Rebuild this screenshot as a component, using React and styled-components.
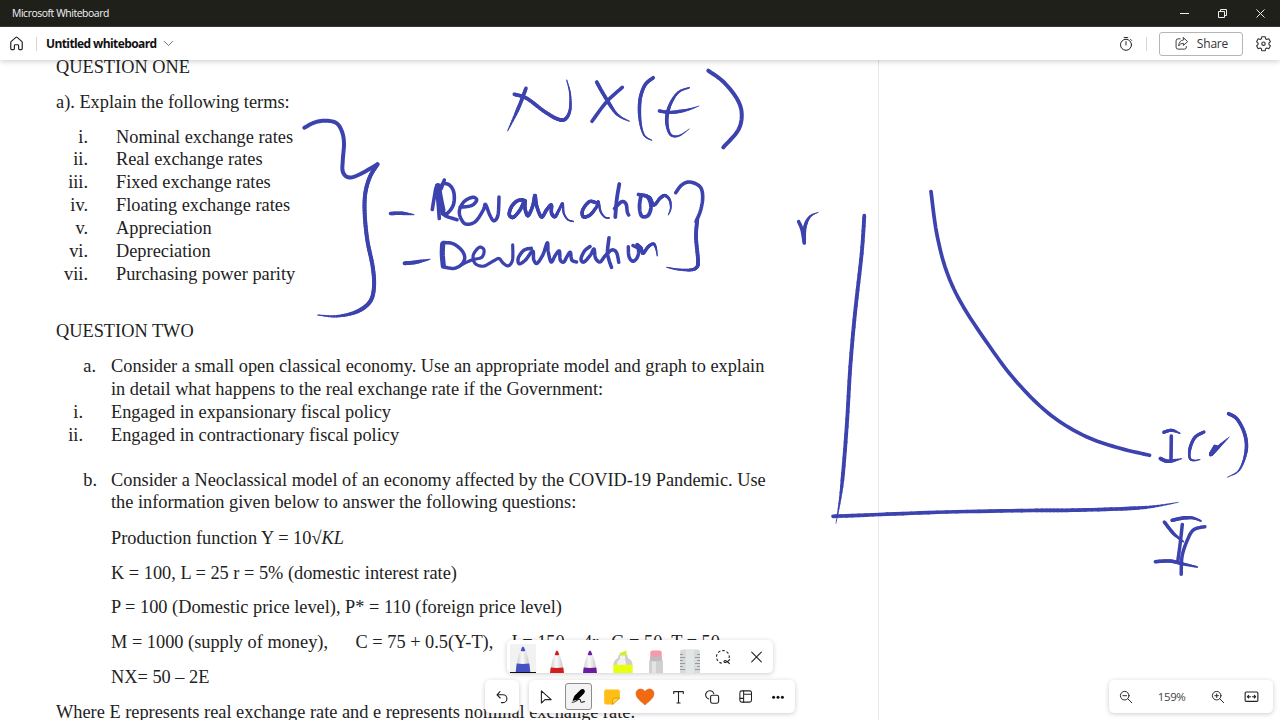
import React from 'react';
import styled, { createGlobalStyle } from 'styled-components';

const GlobalStyle = createGlobalStyle`
  * {
    box-sizing: border-box;
  }

  body {
    margin: 0;
    overflow: hidden;
    background: #fff;
    font-family: 'Open Sans', 'Noto Sans', sans-serif;
  }

  svg {
    display: block;
    flex-shrink: 0;
  }
`;

const Window = styled.div`
  width: 1280px;
  height: 720px;
  display: flex;
  flex-direction: column;
  position: relative;
  overflow: hidden;
`;

const TitleBar = styled.div`
  height: 27px;
  flex-shrink: 0;
  display: flex;
  align-items: center;
  justify-content: space-between;
  padding: 0 0 0 12px;
  background: #20201b;
  border-bottom: 1px solid #3a3a36;
  color: #f4f4f4;
  font-size: 10.4px;
  letter-spacing: -0.44px;
`;

const WindowButtons = styled.div`
  display: flex;

  svg {
    width: 38px;
    height: 26px;
  }
`;

const Header = styled.header`
  height: 33px;
  flex-shrink: 0;
  display: flex;
  align-items: center;
  padding: 0 8px 0 8px;
  background: #fff;
  box-shadow: 0 1px 6px rgba(0, 0, 0, 0.22);
  position: relative;
  z-index: 2;

  .spacer {
    flex: 1;
  }
`;

const Divider = styled.div`
  width: 1px;
  height: 14px;
  background: #d6d6d6;
  margin: ${props => props.$margin};
`;

const BoardName = styled.h1`
  margin: 0 6px 0 0;
  font-size: 12px;
  font-weight: 700;
  letter-spacing: -0.6px;
  color: #111;
  white-space: nowrap;
`;

const ShareButton = styled.button`
  width: 84px;
  height: 24px;
  margin-right: 12px;
  padding: 0;
  display: flex;
  align-items: center;
  justify-content: center;
  gap: 8px;
  border: 1px solid #b5b5b5;
  border-radius: 3px;
  background: #fff;
  color: #333;
  font-family: inherit;
  font-size: 12px;
  letter-spacing: -0.2px;
`;

const Canvas = styled.main`
  flex: 1;
  min-height: 0;
  position: relative;
  overflow: hidden;
`;

const Page = styled.article`
  width: 879px;
  height: 660px;
  overflow: hidden;
  border-right: 1px solid #e6e6e6;
  padding-left: 56px;
  font-family: 'Liberation Serif', serif;
  font-size: 18.33px;
  line-height: 22.85px;
  color: #222;
  white-space: pre;
`;

const Line = styled.div`
  margin-top: ${props => props.$top || 0}px;
  padding-left: ${props => props.$indent || 0}px;
`;

const Item = styled.div`
  display: grid;
  grid-template-columns: ${props => props.$marker}px 1fr;
  column-gap: ${props => props.$gap}px;
  margin-top: ${props => props.$top || 0}px;

  span:first-child {
    text-align: right;
  }
`;

const Ink = styled.svg`
  position: absolute;
  left: 0;
  top: 0;
  fill: none;
  stroke: #3c43ae;
  stroke-linecap: round;
  stroke-linejoin: round;
`;

const Dock = styled.div`
  position: absolute;
  left: ${props => props.$left}px;
  bottom: ${props => props.$bottom}px;
  z-index: 3;
  display: flex;
  gap: 10px;
`;

const Panel = styled.div`
  height: 33px;
  width: ${props => props.$width}px;
  padding-right: ${props => props.$inset || 0}px;
  display: flex;
  align-items: center;
  border-radius: 5px;
  background: #fff;
  box-shadow: 0 1px 5px rgba(0, 0, 0, 0.2);
`;

const Slot = styled.div`
  flex: 1;
  height: 100%;
  display: flex;
  align-items: center;
  justify-content: center;
`;

const Pressed = styled.div`
  width: 27px;
  height: 27px;
  display: flex;
  align-items: center;
  justify-content: center;
  border: 1px solid #8c8c8c;
  border-radius: 3px;
  background: #f3f3f3;
`;

const PenSlot = styled(Slot)`
  align-items: flex-end;
  ${props => props.$selected && `
    flex: none;
    width: 26px;
    height: 29px;
    margin: 4px 4px 0 3px;
    background: #f2f2f2;
    border-bottom: 1px solid #111;
  `}
`;

const ZoomLevel = styled.div`
  width: 58px;
  text-align: center;
  font-size: 11.5px;
  letter-spacing: -0.4px;
  color: #444;
`;

// Each stroke: points, width, and how thin the pen gets at either end
const strokes = [
  // brace
  { p: '304.3,127.7 315,122.3 326.7,120.7 336.7,123.3 342,131.7 344,143.3 342.8,160 342.8,171.7 348.3,177.3 358.3,175 377.5,164.3', w: 4 },
  { p: '377.5,164.3 370,176.7 365.3,193.3 364.7,213.3 367.3,240 372.7,266.7 374,286.7 370,301.7 356.7,311.7 336.7,316.3 317.7,315', w: 4, end: 0.3 },
  // NX(E)
  { p: '526,88.3 518.3,108.3 507.7,130.7', w: 3.6, end: 0.3 },
  { p: '514.3,94.3 526.7,98.3 543.3,110.7 556.7,118.7 565,119.3 570,110 570,93.3 566.7,80', w: 3.6, end: 0.3 },
  { p: '596.7,82 605,96.7 616.7,114 629.3,121.3', w: 3.6, end: 0.3 },
  { p: '622.3,87.3 606.7,101.7 592,121.3', w: 3.6 },
  { p: '653.3,77.7 645,85 640,100 640,120 644,135 651.7,140.3', w: 3.5, end: 0.3 },
  { p: '689.3,87.7 678.3,92.3 670,105 666.7,120 670,134 678.3,136 689.3,129', w: 3.6, start: 0.4, end: 0.2 },
  { p: '659.3,111 671.7,112.3 686.7,110 699,106', w: 3.3, end: 0.2 },
  { p: '708.3,70.7 723.3,81.7 736.7,98.3 741.7,113.3 738.3,130 723.3,147.3', w: 4 },
  // - Revaluation
  { p: '390.5,213.5 402,213.3 414,214.7', w: 3.6, end: 0.3 },
  { p: '432.3,209.5 434,199 436.5,187 438,202 439.3,218.5', w: 3.6 },
  { p: '438,186 440,198 442.5,210', w: 6 },
  { p: '444.3,180 441,189 443,183.5 450,185.5 454,193.3 453.3,205 447,213.5 442,213 447,216.5 457,219.7', w: 3.6 },
  { p: '460,207.3 471.7,205.5 476.7,200 472.7,197.3 464,201.7 459.3,211.7 462.7,221.7 468.3,224.3 476,221 483.3,210 485.5,204.5 490,215.5 494,220.8 498,215 499,197', w: 3.5 },
  { p: '523,199.7 517,201 511.5,206.7 509.3,214.5 513.3,217.3 520,210 524.8,200.5 525,208.5 528,215.7 532.7,206 535,195.5 536.7,206 541.5,217 546.5,210 551.3,205 551.5,213 555,216.7 559,210 562.5,203.5 563.7,213 567.7,219.5 573.3,221.5', w: 3.5, end: 0.4 },
  { p: '596,202.7 589.3,201.7 582.7,210 583.3,216.7 590,215 596.7,206.7 598.3,201.7 600.7,211.7 605,217.3 609.3,218', w: 3.4, end: 0.4 },
  { p: '619.3,184 616.7,200 615.3,217', w: 3.8 },
  { p: '614.5,208.5 621.7,201.7 626,204 627.3,211.7 628.7,215', w: 3.6 },
  { p: '641,195.5 639.5,206.7 641.7,216 648,215.5 651,206.7 647.5,197 638.5,194.5', w: 3.8 },
  { p: '645,195.5 650,198 654,205 660,198.3 665,195.5 669.7,200 670.7,208.3 668.3,215', w: 3.3, end: 0.3 },
  // - Devaluation
  { p: '404.5,263.3 415,262.3 430,259.3', w: 3.8, end: 0.3 },
  { p: '442.7,244 442.3,254 443.3,266', w: 5.2 },
  { p: '443,242.5 453.3,243.8 462,250.7 464.7,258.3 461,265 453.3,268.4 443,266.8', w: 3.5 },
  { p: '461,265 471.7,260 481.7,257.3 484,250 479.3,247.3 473.3,255 475,263.3 483.3,266.2 493.3,261 499,258.5 503,263 508.3,265.8 512.5,260 512.7,244.8', w: 3.2 },
  { p: '531.3,248.3 523.8,250.3 518.3,258 519.3,263.7 525.5,260 532.7,251 533.7,259.5 537,263.3 543,254.5 547.3,242.7 548.3,252 551.2,262 555.3,255.3 559.3,251 560.3,260 563.8,262 567,256.5 570.3,252.3 571.8,260 576.5,262', w: 3.5 },
  { p: '590,246.5 584.5,251 581,259 584,262 590.5,255 594,249 595.5,258 600,262 605,256 611.7,250 616.5,252.5 618.8,262.3', w: 3.5 },
  { p: '609,237.7 607.5,251.7 609,260 611.5,267.3', w: 3.6 },
  { p: '628.3,246.7 629,256.7 633,261.3 637.5,257 638.3,249 633,245.5', w: 3.5 },
  { p: '637,244.5 641,248 643,253.3 648.3,246.7 653.5,243.8 656,248.3 657.3,256', w: 3.3, end: 0.3 },
  // bracket
  { p: '675.7,192.7 681.7,185 690,182 700,186.7 702.7,196.7 700.7,210 696,221.7', w: 3.6 },
  { p: '697.3,219.3 696,236.7 698,260 696.7,267.3 690,270 676.7,269.3 666.7,267.3', w: 3.8, end: 0.3 },
  // r and axes
  { p: '798.7,221.7 802,229.7 804.3,243', w: 3.6 },
  { p: '804.3,242 805,226.7 810,216.5 818.3,212.3', w: 3.4, end: 0.2 },
  { p: '864.3,215.7 861.7,253.3 855,313.3 850.3,366.7 846.7,426.7 841.7,486.7 836,523.3', w: 3.8, end: 0.2 },
  { p: '833,516.3 880,514.5 946.7,512 1030,510.5 1066.7,510.3 1116.7,509 1150,507 1178.3,502.3', w: 3.7, end: 0.2 },
  { p: '931,191.5 936.7,233.3 946.7,271.7 963.3,306.7 993.3,351.7 1015,380 1040,406 1063.3,424 1090,438.3 1120,448.3 1149.5,455.3', w: 3.7 },
  // I(r)
  { p: '1163.7,432.3 1171.7,430.3 1180,433.3', w: 3.2, end: 0.4 },
  { p: '1171.3,436 1171,460', w: 3.6 },
  { p: '1160.3,458.5 1168.3,461.3 1181.7,458.7', w: 3.6, end: 0.3 },
  { p: '1204,432 1195,437.3 1190,448.3 1189.7,458 1194,460.5 1200,459.5', w: 3.2, end: 0.3 },
  { p: '1215,446.5 1210.8,454.5 1220,445.5 1229.3,437', w: 3.6, end: 0.2 },
  { p: '1211.5,453.5 1216.5,447.5', w: 4.6 },
  { p: '1228.5,413.7 1237.3,419.3 1245,435 1246,451.7 1239.3,470 1227.3,477.3', w: 3.5, end: 0.2 },
  // Y over I
  { p: '1172,520.3 1183.3,518 1193,518 1201,521', w: 3.5, end: 0.5 },
  { p: '1164.3,522 1173.3,533.3 1183.3,541.7', w: 3.4, end: 0.5 },
  { p: '1204.8,526.7 1193.3,530 1186.7,541.7 1182,556.7 1181.2,574.3', w: 3.5 },
  { p: '1182.3,524.5 1180,545 1177.7,561.7', w: 3.5 },
  { p: '1155.3,561.7 1170,561 1183.3,564 1197.3,567', w: 3.5, end: 0.5 },
];

const STEPS = 8;
const TAPER = 42;

const spline = (a, b, c, d, t) =>
  0.5 * (2 * b + (c - a) * t + (2 * a - 5 * b + 4 * c - d) * t * t + (3 * b - a - 3 * c + d) * t * t * t);

const Stroke = ({ p, w, start = 1, end = 1 }) => {
  const pts = p.split(' ').map(pair => pair.split(',').map(Number));
  const at = i => pts[Math.max(0, Math.min(pts.length - 1, i))];
  const samples = [];
  for (let i = 0; i < pts.length - 1; i++) {
    for (let s = 0; s < STEPS; s++) {
      samples.push([0, 1].map(k => spline(at(i - 1)[k], at(i)[k], at(i + 1)[k], at(i + 2)[k], s / STEPS)));
    }
  }
  samples.push(pts[pts.length - 1]);

  const run = [0];
  for (let i = 1; i < samples.length; i++) {
    run.push(run[i - 1] + Math.hypot(samples[i][0] - samples[i - 1][0], samples[i][1] - samples[i - 1][1]));
  }
  const total = run[run.length - 1];
  const reach = Math.min(TAPER, total / 2.2);
  const widthAt = d => {
    const head = start + (1 - start) * Math.min(1, d / reach);
    const tail = end + (1 - end) * Math.min(1, (total - d) / reach);
    return w * Math.min(head, tail);
  };

  if (start === 1 && end === 1) {
    return <polyline points={samples.map(s => s.join(',')).join(' ')} strokeWidth={w} />;
  }
  return samples.slice(1).map(([x, y], i) => (
    <line key={i} x1={samples[i][0]} y1={samples[i][1]} x2={x} y2={y} strokeWidth={widthAt(run[i + 1])} />
  ));
};

const Icon = ({ size = 16, width = 1, children, ...rest }) => (
  <svg
    width={size}
    height={size}
    viewBox="0 0 16 16"
    fill="none"
    stroke="#222"
    strokeWidth={width}
    strokeLinecap="round"
    strokeLinejoin="round"
    {...rest}
  >
    {children}
  </svg>
);

const Pen = ({ color, tall }) => (
  <svg width="16" height={tall ? 26 : 23} viewBox={tall ? '0 0 16 26' : '0 0 16 23'}>
    <defs>
      <linearGradient id={`pen${color.slice(1)}`}>
        <stop offset="0" stopColor="#c9c9c9" />
        <stop offset="0.45" stopColor="#fafafa" />
        <stop offset="1" stopColor="#c4c4c4" />
      </linearGradient>
    </defs>
    <path d="M5.8 4.6 L10.2 4.6 C12.6 9 14 14 15 26 L1 26 C2 14 3.4 9 5.8 4.6Z" fill={`url(#pen${color.slice(1)})`} />
    <path d="M8 .4 C9 .4 9.8 3 10.3 4.8 Q8 5.8 5.7 4.8 C6.2 3 7 .4 8 .4Z" fill={color} />
    <path d="M1.7 17.6 Q8 18.4 14.3 17.6 L15.3 26 L.7 26Z" fill={color} />
  </svg>
);

const Highlighter = () => (
  <svg width="22" height="23" viewBox="0 0 22 23">
    <path d="M7.5 5.5 V3.2 L14.5 .5 V5.5Z" fill="#d9ee14" />
    <path d="M6.5 5 H15.5 L16 8 C19.5 10 20.5 12 20.7 16 H1.3 C1.5 12 2.5 10 6 8Z" fill="#cfcfcf" />
    <path d="M8 5.5 H13 V9 C13.6 11 14 13 14 15 H5 C5 12 6 10 8 9Z" fill="#f2f2f2" />
    <path d="M1.3 14.8 H20.7 V23 H1.3Z" fill="#e8ff12" />
  </svg>
);

const Eraser = () => (
  <svg width="16" height="23" viewBox="0 0 16 23">
    <rect x="2.3" y=".4" width="11.4" height="9" rx="2.2" fill="#f49aa8" />
    <path d="M2 6.6 H14 V12 H2Z" fill="#bdbdbd" />
    <path d="M1 10.5 Q8 12 15 10.5 V23 H1Z" fill="#d0d0d0" />
    <path d="M4 11.5 H8 V23 H4Z" fill="#e4e4e4" />
  </svg>
);

const Ruler = () => (
  <svg width="22" height="24" viewBox="0 0 22 24">
    <path d="M1 24 V3 Q1 .5 3.5 .5 H18.5 Q21 .5 21 3 V24Z" fill="#d7dbdc" />
    <path d="M7 .5 H15 V24 H7Z" fill="#e3e6e7" />
    <path d="M1 5.5h3M1 8.5h5M1 11.5h3M1 14.5h5M1 17.5h3M1 20.5h5M21 5.5h-3M21 8.5h-5M21 11.5h-3M21 14.5h-5M21 17.5h-3M21 20.5h-5" stroke="#8d9294" strokeWidth=".9" />
  </svg>
);

const ZoomGlass = ({ plus }) => (
  <Icon size={14} width={1.1}>
    <circle cx="6.5" cy="6.5" r="4.9" />
    <path d="M10.2 10.2 L14.6 14.6 M4.4 6.5 H8.6" />
    {plus && <path d="M6.5 4.4 V8.6" />}
  </Icon>
);

const terms = [
  ['i.', 'Nominal exchange rates'],
  ['ii.', 'Real exchange rates'],
  ['iii.', 'Fixed exchange rates'],
  ['iv.', 'Floating exchange rates'],
  ['v.', 'Appreciation'],
  ['vi.', 'Depreciation'],
  ['vii.', 'Purchasing power parity'],
];

const Worksheet = () => (
  <Page>
    <Line $top={-4}>QUESTION ONE</Line>
    <Line $top={12.1}>a). Explain the following terms:</Line>
    {terms.map(([marker, text], i) => (
      <Item key={marker} $marker={32} $gap={28} $top={i === 0 ? 11.8 : 0}>
        <span>{marker}</span>
        <span>{text}</span>
      </Item>
    ))}
    <Line $top={34.5}>QUESTION TWO</Line>
    <Item $marker={40} $gap={15} $top={12.3}>
      <span>a.</span>
      <span>
        Consider a small open classical economy. Use an appropriate model and graph to explain{'\n'}
        in detail what happens to the real exchange rate if the Government:
      </span>
    </Item>
    <Item $marker={27} $gap={28}>
      <span>i.</span>
      <span>Engaged in expansionary fiscal policy</span>
    </Item>
    <Item $marker={27} $gap={28}>
      <span>ii.</span>
      <span>Engaged in contractionary fiscal policy</span>
    </Item>
    <Item $marker={41} $gap={14} $top={22}>
      <span>b.</span>
      <span>
        Consider a Neoclassical model of an economy affected by the COVID-19 Pandemic. Use{'\n'}
        the information given below to answer the following questions:
      </span>
    </Item>
    <Line $indent={55} $top={12.4}>
      Production function Y = 10√<i>KL</i>
    </Line>
    <Line $indent={55} $top={12.1}>K = 100, L = 25 r = 5% (domestic interest rate)</Line>
    <Line $indent={55} $top={12.1}>P = 100 (Domestic price level), P* = 110 (foreign price level)</Line>
    <Line $indent={55} $top={12.1}>M = 1000 (supply of money),      C = 75 + 0.5(Y-T),    I = 150 – 4r,  G = 50, T = 50</Line>
    <Line $indent={55} $top={12.1}>NX= 50 – 2E</Line>
    <Line $top={12.1}>Where E represents real exchange rate and e represents nominal exchange rate.</Line>
  </Page>
);

const App = () => (
  <>
    <GlobalStyle />
    <Window>
      <TitleBar>
        <span>Microsoft Whiteboard</span>
        <WindowButtons>
          <svg viewBox="0 0 38 26" stroke="#eee" fill="none">
            <path d="M14 13.5 H23" />
          </svg>
          <svg viewBox="0 0 38 26" stroke="#eee" fill="none">
            <path d="M14.5 11.5 h6 v6 h-6z M16.5 11.5 v-2 h6 v6 h-2" />
          </svg>
          <svg viewBox="0 0 38 26" stroke="#eee" fill="none">
            <path d="M14.5 9.5 l8 8 M22.5 9.5 l-8 8" />
          </svg>
        </WindowButtons>
      </TitleBar>

      <Header>
        <Icon size={17} width={1.1}>
          <path d="M2.6 7.1 Q2.6 6.5 3.1 6 L7.4 2.2 Q8 1.7 8.6 2.2 L12.9 6 Q13.4 6.5 13.4 7.1 V12.8 Q13.4 13.7 12.5 13.7 H10.8 Q10 13.7 10 12.9 V10 Q10 9.2 9.2 9.2 H6.8 Q6 9.2 6 10 V12.9 Q6 13.7 5.2 13.7 H3.5 Q2.6 13.7 2.6 12.8Z" />
        </Icon>
        <Divider $margin="0 9px 0 11px" />
        <BoardName>Untitled whiteboard</BoardName>
        <Icon size={11} width={1.2} stroke="#555">
          <path d="M2 5 L8 11 L14 5" />
        </Icon>
        <div className="spacer" />
        <Icon size={16}>
          <circle cx="8" cy="8.8" r="5.5" />
          <path d="M8 5.6 V9 M6.2 1.6 H9.8 M12.6 3.4 L13.6 4.4" />
        </Icon>
        <Divider $margin="0 12px" />
        <ShareButton>
          <Icon size={15} stroke="#333">
            <path d="M6.5 3 H4.5 Q2.2 3 2.2 5.2 V11.8 Q2.2 14 4.4 14 H11 Q13.2 14 13.2 11.8 V11.2" />
            <path d="M10 1.8 L14.6 6 L10 10 V7.8 C7.6 7.8 6.2 8.8 5 10.6 C5.2 7 7 4.4 10 4.1Z" />
          </Icon>
          Share
        </ShareButton>
        <Icon size={17} stroke="#333" viewBox="0 0 24 24" strokeWidth="1.6">
          <path d="M9.7 2.4 h4.6 l.7 3 1.5 .9 3-.9 2.3 4 -2.2 2.1 v1.7 l2.2 2.1 -2.3 4 -3-.9 -1.5 .9 -.7 3 h-4.6 l-.7-3 -1.5-.9 -3 .9 -2.3-4 2.2-2.1 v-1.7 l-2.2-2.1 2.3-4 3 .9 1.5-.9z" />
          <circle cx="12" cy="12.3" r="2.4" />
        </Icon>
      </Header>

      <Canvas>
        <Worksheet />
        <Ink width="1280" height="660" viewBox="0 60 1280 660">
          {strokes.map(stroke => (
            <Stroke key={stroke.p} {...stroke} />
          ))}
        </Ink>
      </Canvas>

      <Dock $left={507} $bottom={47}>
        <Panel $width={266}>
          <PenSlot $selected>
            <Pen color="#4450c4" tall />
          </PenSlot>
          <PenSlot><Pen color="#d31c1c" /></PenSlot>
          <PenSlot><Pen color="#6a1b9e" /></PenSlot>
          <PenSlot><Highlighter /></PenSlot>
          <PenSlot><Eraser /></PenSlot>
          <PenSlot><Ruler /></PenSlot>
          <Slot>
            <Icon size={16} width={1.1}>
              <path d="M14.2 9 A6.4 6.4 0 1 0 7 14.3" strokeDasharray="2.6 1.9" strokeLinecap="butt" />
              <path d="M14.6 10.6 C12.8 13.4 9.2 14.4 9 12.6 C9 10.8 12 11.4 14.4 14.6" />
            </Icon>
          </Slot>
          <Slot>
            <Icon size={16} width={1.1}>
              <path d="M3.7 3.2 L13.3 12.8 M13.3 3.2 L3.7 12.8" />
            </Icon>
          </Slot>
        </Panel>
      </Dock>

      <Dock $left={485} $bottom={7}>
        <Panel $width={34}>
          <Slot>
            <Icon size={16} width={1.1}>
              <path d="M6 2.6 L3 5.8 L6.2 9 M3.2 5.8 H9 A3.9 3.9 0 0 1 9 13.6 H7.4" />
            </Icon>
          </Slot>
        </Panel>
        <Panel $width={266}>
          <Slot>
            <Icon size={16} width={1.1}>
              <path d="M3.4 1.8 V14 L7 10.6 H13.2Z" />
            </Icon>
          </Slot>
          <Slot>
            <Pressed>
              <Icon size={17}>
                <path d="M3 11.6 L4.6 7.6 L10.6 1.8 Q12.2 .8 13.2 2.2 Q14 3.4 12.8 4.8 L7 10.6Z" fill="#000" stroke="#000" />
                <path d="M2 13.4 C5.6 13.8 6.6 10.6 9 10.6 C10.6 10.8 9.2 13.2 10.8 13.4 C11.8 13.5 12.2 12.8 13.6 12.8" />
              </Icon>
            </Pressed>
          </Slot>
          <Slot>
            <svg width="18" height="18" viewBox="0 0 18 18">
              <path d="M3 1.5 H15 Q16.8 1.5 16.8 3.3 V10 L10 16.5 H3 Q1.2 16.5 1.2 14.7 V3.3 Q1.2 1.5 3 1.5Z" fill="#ffbe14" />
              <path d="M16.8 10 H12 Q9.6 10 9.6 12.4 V16.5Z" fill="#ffd84a" stroke="#d98a08" strokeWidth=".8" />
            </svg>
          </Slot>
          <Slot>
            <svg width="20" height="18" viewBox="0 0 20 18">
              <path d="M10 17 C6 13.6 1 10 1 5.6 C1 2.8 3 1 5.4 1 C7.4 1 9 2 10 3.6 C11 2 12.6 1 14.6 1 C17 1 19 2.8 19 5.6 C19 10 14 13.6 10 17Z" fill="#f26a10" stroke="#cf5510" strokeWidth=".5" />
            </svg>
          </Slot>
          <Slot>
            <Icon size={16} width={1.1} strokeLinecap="butt">
              <path d="M2.7 5 V2.6 H12.3 V5 M7.5 2.6 V14 M5.5 14 H9.5" />
            </Icon>
          </Slot>
          <Slot>
            <Icon size={16} width={1.1}>
              <path d="M4.8 10 A4.2 4.2 0 1 1 9.8 4.6" />
              <rect x="6.6" y="6.2" width="8" height="8" rx="1.6" />
            </Icon>
          </Slot>
          <Slot>
            <Icon size={15} width={1.1}>
              <rect x="2" y="2" width="12.4" height="12" rx="2" />
              <path d="M6 2 V14 M6 5.6 H14.2 M2.2 10 H6" />
            </Icon>
          </Slot>
          <Slot>
            <Icon size={16} stroke="none" fill="#111">
              <circle cx="3.6" cy="8.2" r="1.5" />
              <circle cx="8" cy="8.2" r="1.5" />
              <circle cx="12.4" cy="8.2" r="1.5" />
            </Icon>
          </Slot>
        </Panel>
      </Dock>

      <Dock $left={1109} $bottom={7}>
        <Panel $width={164} $inset={5}>
          <Slot>
            <ZoomGlass />
          </Slot>
          <ZoomLevel>159%</ZoomLevel>
          <Slot>
            <ZoomGlass plus />
          </Slot>
          <Slot>
            <Icon size={15} width={1.2}>
              <rect x="1.2" y="3.2" width="13.6" height="10" rx="1.2" />
              <path d="M7 8.2 H3.6 M5 6.8 L3.6 8.2 L5 9.6 M9 8.2 H12.4 M11 6.8 L12.4 8.2 L11 9.6" />
            </Icon>
          </Slot>
        </Panel>
      </Dock>
    </Window>
  </>
);

export default App;
